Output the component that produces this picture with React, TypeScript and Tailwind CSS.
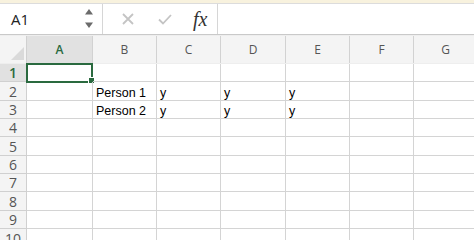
const columns = [
  { name: 'A', width: 'w-[66px]' },
  { name: 'B', width: 'w-[64px]' },
  { name: 'C', width: 'w-[64px]' },
  { name: 'D', width: 'w-[65px]' },
  { name: 'E', width: 'w-[64px]' },
  { name: 'F', width: 'w-[64px]' },
  { name: 'G', width: 'w-[64px]' },
];

const rowHeights = [
  'h-[18px]',
  'h-[19px]',
  'h-[18px]',
  'h-[18px]',
  'h-[19px]',
  'h-[18px]',
  'h-[18px]',
  'h-[19px]',
  'h-[18px]',
  'h-[19px]',
];

const data: Record<number, string[]> = {
  2: ['', 'Person 1', 'y', 'y', 'y', '', ''],
  3: ['', 'Person 2', 'y', 'y', 'y', '', ''],
};

function Stepper() {
  return (
    <svg width="8" height="20" viewBox="0 0 8 20" className="text-[#6b6b6b]">
      <path d="M4 0 L8 5.5 L0 5.5 Z" fill="currentColor" />
      <path d="M0 13.5 L8 13.5 L4 19 Z" fill="currentColor" />
    </svg>
  );
}

export default function App() {
  return (
    <div className="w-[474px] h-[240px] overflow-hidden bg-white font-['Liberation_Sans',Arial,sans-serif]">
      {/* top strip */}
      <div className="h-[4px] bg-[#f8f2de] border-b border-[#dcdcdc]" />

      {/* Formula bar */}
      <div className="h-[31px] flex items-center border-b border-[#c9c9c9] bg-white">
        <div className="w-[103px] h-full flex items-center justify-between pl-[11px] pr-[9px] border-r border-[#d6d6d6]">
          <span className="text-[15px] text-[#222] font-['Open_Sans',sans-serif] leading-none">A1</span>
          <Stepper />
        </div>
        <div className="w-[115px] h-full flex items-center border-r border-[#d6d6d6]">
          <svg width="12" height="12" viewBox="0 0 12 12" className="ml-[19px]">
            <path d="M1 1 L11 11 M11 1 L1 11" stroke="#c4c4c4" strokeWidth="1.8" />
          </svg>
          <svg width="14" height="11" viewBox="0 0 14 11" className="ml-[24px]">
            <path d="M1 5.5 L5 9.5 L13 1" stroke="#c4c4c4" strokeWidth="1.8" fill="none" />
          </svg>
          <span className="ml-[21px] text-[20px] italic text-[#333] font-['Liberation_Serif',serif] leading-none">fx</span>
        </div>
        <div className="flex-1 h-full" />
      </div>

      {/* Sheet */}
      <div className="flex flex-col">
        {/* header row */}
        <div className="flex h-[29px] border-t border-[#eeeeee] border-b border-[#c2c2c2] bg-[#f4f4f4]">
          <div className="w-[27px] shrink-0 border-r border-[#d0d0d0] flex items-end justify-end">
            <svg width="13" height="13" viewBox="0 0 13 13" className="mb-[3px] mr-[2px]">
              <path d="M13 0 L13 13 L0 13 Z" fill="#dadada" />
            </svg>
          </div>
          {columns.map((c, i) => (
            <div
              key={c.name}
              className={`${c.width} shrink-0 border-r border-[#d2d2d2] flex items-center justify-center text-[12px] font-['Open_Sans',sans-serif] ${
                i === 0 ? 'bg-[#e1e1e1] text-[#2a6a3f] font-semibold' : 'text-[#555]'
              }`}
            >
              {c.name}
            </div>
          ))}
        </div>

        {rowHeights.map((h, r) => {
          const rowNum = r + 1;
          const cells = data[rowNum] || ['', '', '', '', '', '', ''];
          return (
            <div key={rowNum} className={`flex ${h} shrink-0`}>
              <div
                className={`w-[27px] shrink-0 border-r border-b border-[#d0d0d0] flex items-center justify-center text-[14px] font-['Open_Sans',sans-serif] ${
                  rowNum === 1 ? 'bg-[#e1e1e1] text-[#2a6a3f] font-semibold' : 'bg-[#f4f4f4] text-[#555]'
                }`}
              >
                {rowNum}
              </div>
              {columns.map((c, i) => (
                <div
                  key={c.name}
                  className={`${c.width} shrink-0 relative border-r border-b border-[#d4d4d4] flex items-end px-[3px] text-[12.5px] leading-[13px] text-black`}
                >
                  {cells[i]}
                  {rowNum === 1 && i === 0 && (
                    <>
                      <div className="absolute -left-px -top-px w-[67px] h-[20px] border-2 border-[#2a6a3f]" />
                      <div className="absolute -right-[3px] -bottom-[3px] w-[5px] h-[5px] bg-[#2a6a3f] border border-white box-content" />
                    </>
                  )}
                </div>
              ))}
            </div>
          );
        })}
      </div>
    </div>
  );
}
